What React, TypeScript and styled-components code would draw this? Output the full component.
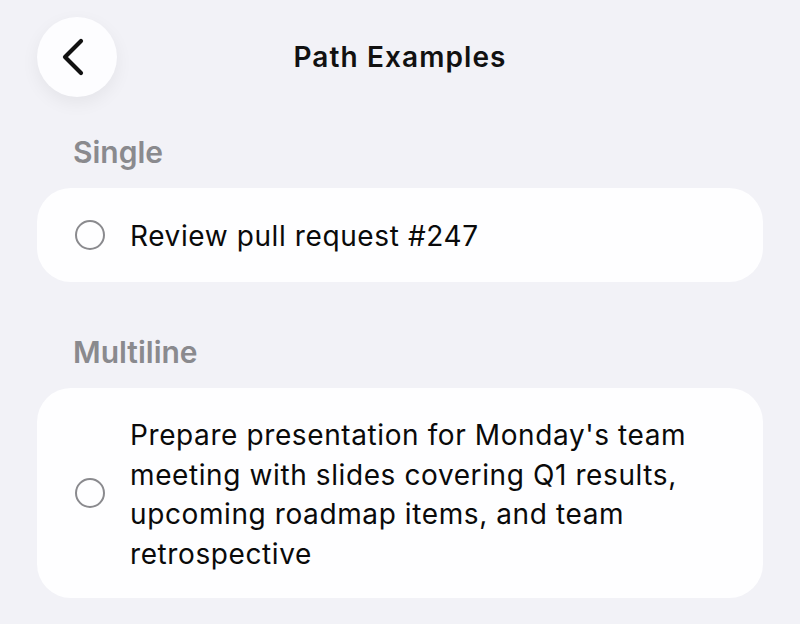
import React from "react";
import styled, { createGlobalStyle } from "styled-components";

const GlobalStyle = createGlobalStyle`
  html, body {
    margin: 0;
    padding: 0;
    background: #f2f2f7;
  }
  body {
    font-family: Inter, "Noto Sans", "Liberation Sans", sans-serif;
    -webkit-font-smoothing: antialiased;
  }
`;

const Page = styled.main`
  width: 800px;
  height: 624px;
  box-sizing: border-box;
  padding: 17px 37px 0 37px;
  background: #f2f2f7;
  overflow: hidden;
`;

const Header = styled.header`
  display: grid;
  grid-template-columns: 80px 1fr 80px;
  align-items: center;
  height: 80px;
`;

const BackButton = styled.button`
  width: 80px;
  height: 80px;
  border: none;
  border-radius: 50%;
  padding: 0;
  background: #fdfdff;
  box-shadow: 0 6px 18px rgba(0, 0, 0, 0.06);
  display: flex;
  align-items: center;
  justify-content: center;
  cursor: pointer;
`;

const Title = styled.h1`
  margin: 0;
  text-align: center;
  font-size: 28px;
  font-weight: 600;
  letter-spacing: 1.1px;
  color: #111;
`;

const SectionLabel = styled.h2<{ $top: number }>`
  margin: ${(p) => p.$top}px 0 18px 0;
  padding-left: 36px;
  font-size: 30px;
  line-height: 36px;
  font-weight: 600;
  color: #8a8a8e;
`;

const Card = styled.div`
  display: flex;
  align-items: center;
  gap: 25px;
  min-height: 94px;
  box-sizing: border-box;
  padding: 26px 30px 26px 38px;
  border-radius: 34px;
  background: #fefeff;
`;

const Radio = styled.span`
  flex: none;
  width: 30px;
  height: 30px;
  box-sizing: border-box;
  border-radius: 50%;
  border: 2.5px solid #8a8a8e;
`;

// SF-style text sits a little lower in its line than Inter does
const TaskText = styled.p`
  margin: 0 0 -2px 0;
  padding-top: 2px;
  font-size: 28px;
  line-height: 39.5px;
  letter-spacing: 0.6px;
  color: #0a0a0a;
`;

const ChevronLeft = () => (
  <svg width="80" height="80" viewBox="0 0 80 80" fill="none">
    <polyline
      points="44,24 28,40 44,56"
      stroke="#111"
      strokeWidth="4.2"
      strokeLinecap="round"
      strokeLinejoin="round"
    />
  </svg>
);

const tasks = {
  single: "Review pull request #247",
  multiline:
    "Prepare presentation for Monday's team meeting with slides covering Q1 results, upcoming roadmap items, and team retrospective",
};

export default function App() {
  return (
    <>
      <GlobalStyle />
      <Page>
        <Header>
          <BackButton aria-label="Back">
            <ChevronLeft />
          </BackButton>
          <Title>Path Examples</Title>
          <span />
        </Header>

        <SectionLabel $top={37}>Single</SectionLabel>
        <Card>
          <Radio />
          <TaskText>{tasks.single}</TaskText>
        </Card>

        <SectionLabel $top={52}>Multiline</SectionLabel>
        <Card>
          <Radio />
          <TaskText>{tasks.multiline}</TaskText>
        </Card>
      </Page>
    </>
  );
}
